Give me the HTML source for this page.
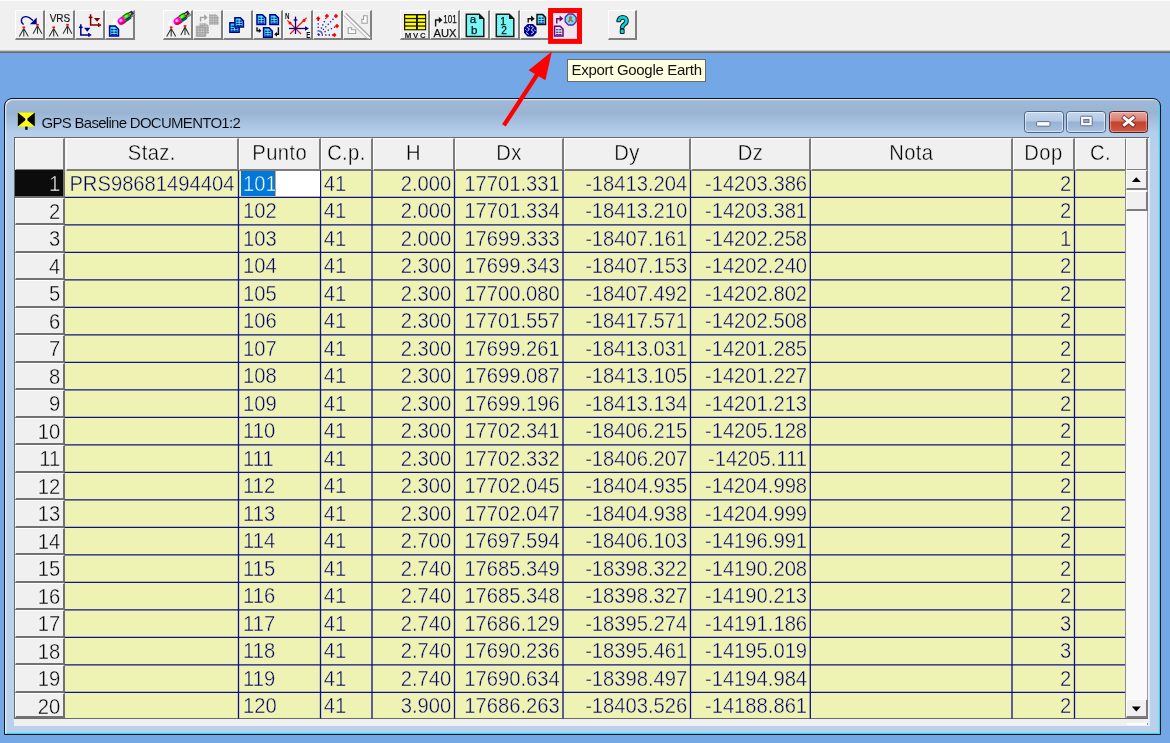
<!DOCTYPE html>
<html><head><meta charset="utf-8"><title>GPS Baseline</title>
<style>
html,body{margin:0;padding:0;}
body{width:1170px;height:743px;overflow:hidden;background:#74a7e6;position:relative;font-family:"Liberation Sans",sans-serif;}
#root{position:absolute;left:0;top:0;width:1170px;height:743px;will-change:transform;}
.abs{position:absolute;}
#toolbar{left:0;top:0;width:1170px;height:50px;background:#f0f0f0;border-top:1px solid #fafafa;box-sizing:border-box;}
#tbline{left:0;top:50px;width:1170px;height:3px;background:linear-gradient(#c6c6c6 0,#c6c6c6 33%,#8a8a8a 33%,#8a8a8a 66%,#696c71 66%);}
.tb{position:absolute;top:10px;height:30.4px;width:29.9px;box-sizing:border-box;background:#f0f0f0;border-top:1px solid #fff;border-left:1px solid #fff;border-bottom:2px solid #808080;border-right:2px solid #808080;}
.tb svg{position:absolute;left:0;top:0;}
#win{left:4.1px;top:97.8px;width:1156.8px;height:637.4px;box-sizing:border-box;border:1.2px solid #10161e;border-radius:8px 8px 0 0;background:linear-gradient(#9fb8d6 0px,#9ab4d4 14px,#b4ceec 34px,#b9d1ec 60px,#b9d1ec 100%);box-shadow:inset 1.3px 1.3px 0 rgba(255,255,255,.6), inset -1.2px -1.2px 0 #40d4ee;}
#title{left:41.6px;top:113.6px;font-size:15px;line-height:18px;color:#000;white-space:nowrap;letter-spacing:-0.72px;-webkit-text-stroke:0.12px #a9c3e3;}
#grid{left:14px;top:137px;width:1134px;height:581.5px;background:#f0f0f0;overflow:hidden;}
.cell{position:absolute;font-size:20.2px;color:#00006c;-webkit-text-stroke:0.4px #eef2b2;transform:scaleY(1.11);transform-origin:0 20px;white-space:nowrap;line-height:26px;height:26px;}
.hd{position:absolute;font-size:20.2px;color:#000;-webkit-text-stroke:0.38px #f0f0f0;letter-spacing:0.4px;white-space:nowrap;text-align:center;line-height:31px;}
.rh{position:absolute;font-size:20.2px;color:#000;-webkit-text-stroke:0.38px #f0f0f0;text-align:right;line-height:26px;}
.wbtn{top:110.8px;height:21.8px;box-sizing:border-box;border:1.2px solid #4f6482;border-radius:3.5px;background:linear-gradient(#c6d8ee 0%,#b3c9e6 45%,#97b1d3 50%,#a9c2e2 100%);box-shadow:inset 0 0 0 1.1px rgba(255,255,255,.55);}
.wclose{border-color:#5a1f1f;background:linear-gradient(#e8a99e 0%,#d9786a 45%,#c2402e 50%,#cf5a42 100%);box-shadow:inset 0 0 0 1.1px rgba(255,255,255,.35);}
.sbtn{box-sizing:border-box;background:#f0f0f0;border-top:1.4px solid #fff;border-left:1.4px solid #fff;border-right:2.3px solid #7c7c7c;border-bottom:2.3px solid #7c7c7c;}
#tip{left:567.3px;top:58.6px;width:138.4px;height:23px;box-sizing:border-box;border:1.2px solid #6a6a6a;background:#ffffe1;font-size:15px;line-height:20px;color:#111;white-space:nowrap;padding-left:3.2px;letter-spacing:-0.3px;}
.sy{display:inline-block;transform:translateY(-0.3px) scaleY(1.11);transform-origin:0 78%;}
.sr{display:inline-block;transform:translateY(1.2px) scaleY(1.11);transform-origin:0 78%;}
.vl{position:absolute;width:1.5px;background:#10107c;}
.hl{position:absolute;height:1.5px;background:#10107c;}
</style></head><body>
<div id="root">
<div id="toolbar" class="abs"></div>
<div id="tbline" class="abs"></div>
<div class="tb" style="left:15.30px;"></div>
<div class="tb" style="left:45.23px;"></div>
<div class="tb" style="left:75.16px;"></div>
<div class="tb" style="left:105.09px;"></div>
<div class="tb" style="left:163.00px;"></div>
<div class="tb" style="left:192.93px;"></div>
<div class="tb" style="left:222.86px;"></div>
<div class="tb" style="left:252.79px;"></div>
<div class="tb" style="left:282.72px;"></div>
<div class="tb" style="left:312.65px;"></div>
<div class="tb" style="left:342.58px;"></div>
<div class="tb" style="left:400.10px;"></div>
<div class="tb" style="left:430.03px;"></div>
<div class="tb" style="left:459.96px;"></div>
<div class="tb" style="left:489.89px;"></div>
<div class="tb" style="left:519.82px;"></div>
<div class="tb" style="left:607.60px;"></div>
<svg class="abs" style="left:0;top:0;" width="1170" height="52" viewBox="0 0 1170 52" font-family="Liberation Sans, sans-serif">
<defs>
<pattern id="ghatch" width="2.46" height="2.46" patternUnits="userSpaceOnUse"><rect width="2.46" height="2.46" fill="#a6a6a6"/><rect x="1.4" y="1.4" width="1.06" height="1.06" fill="#e8e8e8"/></pattern>
<pattern id="cdith" width="2.46" height="2.46" patternUnits="userSpaceOnUse"><rect width="2.46" height="2.46" fill="#9cfefe"/><rect width="1.23" height="1.23" fill="#52f0f0"/><rect x="1.23" y="1.23" width="1.23" height="1.23" fill="#52f0f0"/></pattern>
</defs>
<g stroke="#1a1a1a" stroke-width="1.05" fill="none" stroke-linecap="butt" opacity=".9"><path d="M23.8,28.4 L19.3,36.6 M23.8,28.4 L28.3,36.6 M23.8,28.4 L23.8,36.6"/></g><rect x="22.5" y="26.5" width="2.6" height="1.7" fill="#f00"/>
<g stroke="#1a1a1a" stroke-width="1.05" fill="none" stroke-linecap="butt" opacity=".9"><path d="M37.5,25.8 L33.1,33.8 M37.5,25.8 L41.9,33.8 M37.5,25.8 L37.5,33.8"/></g><rect x="36.2" y="23.900000000000002" width="2.6" height="1.7" fill="#f00"/>
<path d="M23.6,24.6 C19.6,21.5 21.2,16.4 26.4,16.6 C29.4,16.8 31,18.6 33,20.6" fill="none" stroke="#00008c" stroke-width="1.3"/>
<path d="M36.7,17.6 L36.7,24.2 L29.9,24.2 Z" fill="#00008c"/>
<text x="49.7" y="21.8" font-size="10.6" fill="#111" stroke="#111" stroke-width=".15" textLength="20.6" lengthAdjust="spacingAndGlyphs">VRS</text>
<g stroke="#1a1a1a" stroke-width="1.05" fill="none" stroke-linecap="butt" opacity=".9"><path d="M53.7,28.4 L49.2,36.6 M53.7,28.4 L58.2,36.6 M53.7,28.4 L53.7,36.6"/></g><rect x="52.400000000000006" y="26.5" width="2.6" height="1.7" fill="#f00"/>
<g stroke="#1a1a1a" stroke-width="1.05" fill="none" stroke-linecap="butt" opacity=".9"><path d="M67.5,25.8 L63.1,33.8 M67.5,25.8 L71.9,33.8 M67.5,25.8 L67.5,33.8"/></g><rect x="66.2" y="23.900000000000002" width="2.6" height="1.7" fill="#f00"/>
<g stroke="#800000" stroke-width="1.5" fill="none"><path d="M90.6,14.3 L90.6,25.0 L101.1,25.0"/><path d="M88.69999999999999,17.4 L92.5,17.4"/><path d="M98.69999999999999,23.1 L98.69999999999999,26.9"/></g><path d="M93.89999999999999,17.9 L100.19999999999999,17.9 L97.05,21.8 Z" fill="#800000"/>
<g stroke="#00008c" stroke-width="1.5" fill="none"><path d="M80.8,24.2 L80.8,34.9 L91.3,34.9"/><path d="M78.89999999999999,27.299999999999997 L82.7,27.299999999999997"/><path d="M88.89999999999999,33.0 L88.89999999999999,36.8"/></g><path d="M84.1,27.799999999999997 L90.39999999999999,27.799999999999997 L87.25,31.7 Z" fill="#00008c"/>
<path d="M114.3,17.6 L116.6,25.2 L112.3,25.2 Z" fill="#fff"/>
<path d="M109.6,26.0 L115.3,26.0 L118.5,29.2 L118.5,36.0 L109.6,36.0 Z" fill="#35d6f0" stroke="#00008c" stroke-width="1.5" stroke-linejoin="miter"/><path d="M111.19999999999999,29.6 L116.9,29.6" stroke="#00008c" stroke-width="1.1"/><path d="M111.19999999999999,32.2 L116.9,32.2" stroke="#00008c" stroke-width="1.1"/><path d="M111.19999999999999,34.6 L116.9,34.6" stroke="#00008c" stroke-width="1.1"/><path d="M114.05,27.5 L114.05,34.5" stroke="#b8ffff" stroke-width="0.9" opacity=".8"/>
<g transform="translate(121.9,20.7) rotate(-34) scale(1.04,0.84)"><path d="M0,-4.3 L3.2,-4.3 L3.2,4.3 L0,4.3 A4.3,4.3 0 0 1 0,-4.3 Z" fill="#ff00d0"/><path d="M0,4.3 A4.3,4.3 0 0 1 -4.1,1.2 L3.2,2.4 L3.2,4.3 Z" fill="#d80040"/><ellipse cx="-0.6" cy="-0.9" rx="1.7" ry="1.9" fill="#ff8ae8"/><ellipse cx="-0.9" cy="-1.1" rx="0.8" ry="0.9" fill="#ffe0fa"/><rect x="3.2" y="-4.3" width="5.6" height="5.4" fill="#14d400"/><rect x="3.2" y="-4.3" width="5.6" height="1.3" fill="#0a7a00"/><ellipse cx="5.8" cy="-1.6" rx="1.8" ry="1.4" fill="#7cff30"/><rect x="3.2" y="1.1" width="5.6" height="3.2" fill="#005e62"/><rect x="3.2" y="1.1" width="5.6" height="1.0" fill="#063030"/><rect x="8.8" y="-3.6" width="4.6" height="6.8" fill="#2a2a2a"/><rect x="9.4" y="-2.2" width="1.7" height="1.7" fill="#ffff00"/><rect x="11.4" y="-1.6" width="1.6" height="1.7" fill="#2828a8"/><rect x="9.8" y="0.9" width="4.2" height="2.4" fill="#909090"/></g>
<path d="M170.3,18.4 L172.6,25.6 L168.2,25.6 Z" fill="#fff"/>
<g transform="translate(177.8,20.9) rotate(-34) scale(1.04,0.84)"><path d="M0,-4.3 L3.2,-4.3 L3.2,4.3 L0,4.3 A4.3,4.3 0 0 1 0,-4.3 Z" fill="#ff00d0"/><path d="M0,4.3 A4.3,4.3 0 0 1 -4.1,1.2 L3.2,2.4 L3.2,4.3 Z" fill="#d80040"/><ellipse cx="-0.6" cy="-0.9" rx="1.7" ry="1.9" fill="#ff8ae8"/><ellipse cx="-0.9" cy="-1.1" rx="0.8" ry="0.9" fill="#ffe0fa"/><rect x="3.2" y="-4.3" width="5.6" height="5.4" fill="#14d400"/><rect x="3.2" y="-4.3" width="5.6" height="1.3" fill="#0a7a00"/><ellipse cx="5.8" cy="-1.6" rx="1.8" ry="1.4" fill="#7cff30"/><rect x="3.2" y="1.1" width="5.6" height="3.2" fill="#005e62"/><rect x="3.2" y="1.1" width="5.6" height="1.0" fill="#063030"/><rect x="8.8" y="-3.6" width="4.6" height="6.8" fill="#2a2a2a"/><rect x="9.4" y="-2.2" width="1.7" height="1.7" fill="#ffff00"/><rect x="11.4" y="-1.6" width="1.6" height="1.7" fill="#2828a8"/><rect x="9.8" y="0.9" width="4.2" height="2.4" fill="#909090"/></g>
<g stroke="#1a1a1a" stroke-width="1.05" fill="none" stroke-linecap="butt" opacity=".9"><path d="M171.2,28.4 L166.7,36.6 M171.2,28.4 L175.7,36.6 M171.2,28.4 L171.2,36.6"/></g><rect x="169.89999999999998" y="26.5" width="2.6" height="1.7" fill="#f00"/>
<g stroke="#1a1a1a" stroke-width="1.05" fill="none" stroke-linecap="butt" opacity=".9"><path d="M185.0,27.099999999999998 L180.8,34.9 M185.0,27.099999999999998 L189.2,34.9 M185.0,27.099999999999998 L185.0,34.9"/></g><rect x="183.7" y="25.2" width="2.6" height="1.7" fill="#f00"/>
<path d="M200.6,21.6 L200.6,17.4 L204.5,17.4" fill="none" stroke="#a0a0a0" stroke-width="1.4"/>
<path d="M204.2,14.2 L207.6,17.4 L204.2,20.6 Z" fill="#a0a0a0"/>
<path d="M209.2,14.3 L216,14.3 L218.8,17 L218.8,24.8 L209.2,24.8 Z" fill="url(#ghatch)"/>
<path d="M199.5,23.3 L206.2,23.3 L209,26 L209,33.6 L199.5,33.6 Z" fill="url(#ghatch)"/>
<path d="M196.3,26.2 L203,26.2 L205.8,29 L205.8,36.5 L196.3,36.5 Z" fill="url(#ghatch)" stroke="#a0a0a0" stroke-width=".8"/>
<path d="M229.9,22.8 L235.9,22.8 L239.1,26.0 L239.1,32.2 L229.9,32.2 Z" fill="#35d6f0" stroke="#00008c" stroke-width="1.5" stroke-linejoin="miter"/><path d="M231.5,26.184 L237.5,26.184" stroke="#00008c" stroke-width="1.1"/><path d="M231.5,28.628 L237.5,28.628" stroke="#00008c" stroke-width="1.1"/><path d="M231.5,30.884 L237.5,30.884" stroke="#00008c" stroke-width="1.1"/><path d="M234.5,24.3 L234.5,30.700000000000003" stroke="#b8ffff" stroke-width="0.9" opacity=".8"/>
<path d="M234.9,17.7 L240.20000000000002,17.7 L243.4,20.9 L243.4,27.0 L234.9,27.0 Z" fill="#35d6f0" stroke="#00008c" stroke-width="1.5" stroke-linejoin="miter"/><path d="M236.5,21.048 L241.8,21.048" stroke="#00008c" stroke-width="1.1"/><path d="M236.5,23.466 L241.8,23.466" stroke="#00008c" stroke-width="1.1"/><path d="M236.5,25.698 L241.8,25.698" stroke="#00008c" stroke-width="1.1"/><path d="M239.15,19.2 L239.15,25.5" stroke="#b8ffff" stroke-width="0.9" opacity=".8"/>
<path d="M257.0,14.7 L262.40000000000003,14.7 L265.6,17.9 L265.6,24.4 L257.0,24.4 Z" fill="#35d6f0" stroke="#00008c" stroke-width="1.5" stroke-linejoin="miter"/><path d="M258.6,18.192 L264.0,18.192" stroke="#00008c" stroke-width="1.1"/><path d="M258.6,20.714 L264.0,20.714" stroke="#00008c" stroke-width="1.1"/><path d="M258.6,23.041999999999998 L264.0,23.041999999999998" stroke="#00008c" stroke-width="1.1"/><path d="M261.3,16.2 L261.3,22.9" stroke="#b8ffff" stroke-width="0.9" opacity=".8"/>
<path d="M269.9,14.7 L275.2,14.7 L278.4,17.9 L278.4,24.4 L269.9,24.4 Z" fill="#35d6f0" stroke="#00008c" stroke-width="1.5" stroke-linejoin="miter"/><path d="M271.5,18.192 L276.79999999999995,18.192" stroke="#00008c" stroke-width="1.1"/><path d="M271.5,20.714 L276.79999999999995,20.714" stroke="#00008c" stroke-width="1.1"/><path d="M271.5,23.041999999999998 L276.79999999999995,23.041999999999998" stroke="#00008c" stroke-width="1.1"/><path d="M274.15,16.2 L274.15,22.9" stroke="#b8ffff" stroke-width="0.9" opacity=".8"/>
<path d="M263.6,27.8 L269.0,27.8 L272.2,31.0 L272.2,37.3 L263.6,37.3 Z" fill="#35d6f0" stroke="#00008c" stroke-width="1.5" stroke-linejoin="miter"/><path d="M265.20000000000005,31.22 L270.59999999999997,31.22" stroke="#00008c" stroke-width="1.1"/><path d="M265.20000000000005,33.69 L270.59999999999997,33.69" stroke="#00008c" stroke-width="1.1"/><path d="M265.20000000000005,35.97 L270.59999999999997,35.97" stroke="#00008c" stroke-width="1.1"/><path d="M267.9,29.3 L267.9,35.8" stroke="#b8ffff" stroke-width="0.9" opacity=".8"/>
<path d="M257,27.2 L257,30.7 L259.4,30.7" fill="none" stroke="#111" stroke-width="1.4"/><path d="M258.8,28.3 L261.4,30.7 L258.8,33.1 Z" fill="#111"/>
<path d="M278.4,27.2 L278.4,34.3 L276.4,34.3" fill="none" stroke="#111" stroke-width="1.4"/><path d="M277,31.9 L274.2,34.3 L277,36.7 Z" fill="#111"/>
<g stroke="#f01818" stroke-width="1.2"><path d="M287.4,20.4 L301,34"/><path d="M290,34 L306.6,17.8"/></g>
<circle cx="290" cy="23" r="1.5" fill="#f00"/><circle cx="304" cy="20.4" r="1.5" fill="#f00"/>
<g stroke="#00008c" stroke-width="1.3" fill="none"><path d="M295.5,16.6 L295.5,34"/><path d="M289,28.5 L306.5,28.5"/><path d="M293.6,20 L297.4,20"/></g>
<path d="M305,26.2 L308.9,28.5 L305,30.8 Z" fill="#00008c"/>
<text x="284.9" y="18.9" font-size="8.4" font-weight="bold" fill="#111" textLength="4.5" lengthAdjust="spacingAndGlyphs">N</text>
<text x="306.2" y="38" font-size="8.4" font-weight="bold" fill="#111" textLength="4.2" lengthAdjust="spacingAndGlyphs">E</text>
<path d="M318.2,35.0 L318.2,18.5" stroke="#1c1ca0" stroke-width="1.35" stroke-dasharray="1.3 2.2" fill="none"/>
<path d="M318.2,35.0 L326.9,16.0" stroke="#1c1ca0" stroke-width="1.35" stroke-dasharray="1.3 2.2" fill="none"/>
<path d="M318.2,35.0 L336.0,16.0" stroke="#1c1ca0" stroke-width="1.35" stroke-dasharray="1.3 2.2" fill="none"/>
<path d="M318.2,35.0 L337.0,26.0" stroke="#1c1ca0" stroke-width="1.35" stroke-dasharray="1.3 2.2" fill="none"/>
<path d="M318.2,35.0 L334.4,35.0" stroke="#1c1ca0" stroke-width="1.35" stroke-dasharray="1.3 2.2" fill="none"/>
<path d="M316.0,18.5 L318.2,16.3 L320.4,18.5 L318.2,20.7 Z" fill="#f00"/>
<path d="M324.7,16.0 L326.9,13.8 L329.09999999999997,16.0 L326.9,18.2 Z" fill="#f00"/>
<path d="M333.8,16.0 L336.0,13.8 L338.2,16.0 L336.0,18.2 Z" fill="#f00"/>
<path d="M334.8,26.0 L337.0,23.8 L339.2,26.0 L337.0,28.2 Z" fill="#f00"/>
<path d="M332.2,35.0 L334.4,32.8 L336.59999999999997,35.0 L334.4,37.2 Z" fill="#f00"/>
<path d="M345.8,13.2 L371,37.8" stroke="#a0a0a0" stroke-width="1.2"/><path d="M344.6,14.2 L369.6,38.6" stroke="#fff" stroke-width="1.2"/><path d="M343.6,15.4 L368.4,39.6" stroke="#a8a8a8" stroke-width="1.0"/>
<path d="M363.6,15.8 L367.2,15.8 L367.2,23.2 L361.9,23.2 L361.9,19.4 L363.6,19.4 Z" fill="#fff" stroke="#a0a0a0" stroke-width="1.1"/>
<path d="M348.2,27.8 L351.6,27.8 L351.6,29.8 L355.7,29.8 L355.7,33.5 L348.2,33.5 Z" fill="#fff" stroke="#a0a0a0" stroke-width="1.1"/>
<rect x="404" y="14" width="22.2" height="16.3" fill="#141400"/>
<rect x="405.2" y="15.40" width="10.8" height="2.5" fill="#ffff00"/>
<rect x="417.9" y="15.40" width="7.2" height="2.5" fill="#ffff00"/>
<rect x="405.2" y="19.15" width="10.8" height="2.5" fill="#ffff00"/>
<rect x="417.9" y="19.15" width="7.2" height="2.5" fill="#ffff00"/>
<rect x="405.2" y="22.90" width="10.8" height="2.5" fill="#ffff00"/>
<rect x="417.9" y="22.90" width="7.2" height="2.5" fill="#ffff00"/>
<rect x="405.2" y="26.65" width="10.8" height="2.5" fill="#ffff00"/>
<rect x="417.9" y="26.65" width="7.2" height="2.5" fill="#ffff00"/>
<text x="404.8" y="37.9" font-size="7.9" font-weight="bold" fill="#111" textLength="20.8" lengthAdjust="spacing">MVC</text>
<path d="M435.6,26.4 L435.6,20 L439.4,20" fill="none" stroke="#111" stroke-width="1.4"/><path d="M438.8,16.8 L442.4,20 L438.8,23.2 Z" fill="#111"/>
<text x="443.3" y="22.5" font-size="11.2" fill="#111" stroke="#111" stroke-width=".25" textLength="13.4" lengthAdjust="spacingAndGlyphs">101</text>
<text x="433.6" y="36.6" font-size="11.2" fill="#111" stroke="#111" stroke-width=".25" textLength="23" lengthAdjust="spacingAndGlyphs">AUX</text>
<path d="M466.3,14.2 L479.2,14.2 L483.8,18.799999999999997 L483.8,36.5 L466.3,36.5 Z" fill="url(#cdith)" stroke="#1a1a1a" stroke-width="1.5"/><path d="M479.0,14.2 L483.8,19.0 L479.0,19.0 Z" fill="#111"/><text x="473.1" y="22.5" font-size="11.6" fill="#111" stroke="#111" stroke-width=".25" text-anchor="middle">a</text><text x="474.3" y="33.7" font-size="11.6" fill="#111" stroke="#111" stroke-width=".25" text-anchor="middle">b</text>
<path d="M496.3,14.2 L509.19999999999993,14.2 L513.8,18.799999999999997 L513.8,36.5 L496.3,36.5 Z" fill="url(#cdith)" stroke="#1a1a1a" stroke-width="1.5"/><path d="M508.99999999999994,14.2 L513.8,19.0 L508.99999999999994,19.0 Z" fill="#111"/><text x="503.2" y="24.9" font-size="10.2" fill="#111" stroke="#111" stroke-width=".25" text-anchor="middle">1</text><text x="504.0" y="33.7" font-size="10.2" fill="#111" stroke="#111" stroke-width=".25" text-anchor="middle">2</text>
<path d="M528.2,22.6 L528.2,18.7 L531.6,18.7" fill="none" stroke="#111" stroke-width="1.4"/><path d="M531,15.6 L534.7,18.7 L531,21.8 Z" fill="#111"/>
<path d="M537.0,14.6 L542.7,14.6 L545.5,17.4 L545.5,24.4 L537.0,24.4 Z" fill="#5ce8f4" stroke="#141414" stroke-width="1.5" stroke-linejoin="miter"/><path d="M538.6,18.128 L543.9,18.128" stroke="#00008c" stroke-width="1.1"/><path d="M538.6,20.676 L543.9,20.676" stroke="#00008c" stroke-width="1.1"/><path d="M538.6,23.028 L543.9,23.028" stroke="#00008c" stroke-width="1.1"/><path d="M541.25,16.1 L541.25,22.9" stroke="#b8ffff" stroke-width="0.9" opacity=".8"/>
<path d="M527.6,24 L533,24 L536.6,27.6 L536.6,32.8 L533,36.4 L527.6,36.4 L524,32.8 L524,27.6 Z" fill="#00008c"/>
<g stroke="#e8e8ff" stroke-width="1" fill="none"><path d="M526.6,27.2 L529.4,28.8 L527.6,31.4 M531,26 L533.6,27.8 L531.2,30 L533.8,32.2 L531,34.2 M526,32.6 L528.6,34.4 M529.4,25.4 L529.4,27 M534.6,29.6 L535.4,31 M525.4,29.4 L526.4,30.4"/></g>
<rect x="550.6" y="10.5" width="28.9" height="30.9" fill="#f0e4f1" stroke="#ff0000" stroke-width="5"/>
<path d="M556.8,23.4 L556.8,18.7 L560.2,18.7" fill="none" stroke="#700070" stroke-width="1.4"/><path d="M559.6,15.6 L563.3,18.7 L559.6,21.8 Z" fill="#700070"/>
<path d="M568.4,14 L573,14 L576.2,17.2 L576.2,21.8 L573,25 L568.4,25 L565.2,21.8 L565.2,17.2 Z" fill="#6ae6f2" stroke="#6a20a0" stroke-width="1.3"/>
<path d="M570.6,15.6 L572.4,17.6 L571.6,19.4 L573.8,21.6 L572,22.4 L570.6,20.6 L569,22.8 L567.8,21.6 L569.4,19.2 L568.6,17.4 Z" fill="#a07050"/>
<path d="M554.5,26.2 L560.2,26.2 L563.0,29.0 L563.0,36.0 L554.5,36.0 Z" fill="#c8e8f8" stroke="#700070" stroke-width="1.5" stroke-linejoin="miter"/><path d="M556.1,29.727999999999998 L561.4,29.727999999999998" stroke="#700070" stroke-width="1.1"/><path d="M556.1,32.275999999999996 L561.4,32.275999999999996" stroke="#700070" stroke-width="1.1"/><path d="M556.1,34.628 L561.4,34.628" stroke="#700070" stroke-width="1.1"/><path d="M558.75,27.7 L558.75,34.5" stroke="#b8ffff" stroke-width="0.9" opacity=".8"/>
<text x="622.6" y="33.3" font-size="23.5" font-weight="bold" fill="#00d4dc" stroke="#181818" stroke-width="2.2" stroke-linejoin="round" text-anchor="middle" paint-order="stroke" textLength="12.8" lengthAdjust="spacingAndGlyphs">?</text>
</svg>
<div id="win" class="abs"></div>

<svg class="abs" style="left:17px;top:111px;" width="20" height="20" viewBox="0 0 20 20">
<rect x="0.8" y="1.6" width="17" height="14" fill="#ffff00"/>
<path d="M0.8,1.6 L9.3,8.6 L0.8,15.6 Z" fill="#000"/>
<path d="M17.8,1.6 L9.3,8.6 L17.8,15.6 Z" fill="#000"/>
<rect x="8.4" y="7.4" width="2" height="2.2" fill="#fff"/>
<rect x="8.2" y="15.6" width="2.4" height="3.2" fill="#000"/>
</svg>
<div id="title" class="abs">GPS Baseline DOCUMENTO1:2</div>
<div class="abs wbtn" style="left:1024px;width:39.5px;"></div>
<div class="abs wbtn" style="left:1066.3px;width:39.3px;"></div>
<div class="abs wbtn wclose" style="left:1108.8px;width:39.6px;"></div>
<svg class="abs" style="left:1020px;top:108px;" width="134" height="28" viewBox="1020 108 134 28">
<rect x="1036.6" y="121.6" width="13.4" height="4.6" rx="1" fill="#fbfcfe" stroke="#5e6e84" stroke-width="1"/>
<rect x="1080.6" y="116.2" width="11.6" height="9.6" rx="1" fill="#fbfcfe" stroke="#5e6e84" stroke-width="1"/>
<rect x="1083.8" y="119.4" width="5.2" height="3.2" fill="#93abc9" stroke="#5e6e84" stroke-width=".9"/>
<path d="M1124.4,117.8 L1133,124.8 M1133,117.8 L1124.4,124.8" stroke="#5a2a2a" stroke-width="4.8" stroke-linecap="square" opacity=".75"/>
<path d="M1124.4,117.8 L1133,124.8 M1133,117.8 L1124.4,124.8" stroke="#fcfcfc" stroke-width="2.9" stroke-linecap="square"/>
</svg>


<div class="abs" style="left:14.2px;top:136.7px;width:1134.6px;height:588.9px;background:#f0f0f0;box-shadow:1px 0 0 rgba(255,255,255,.55);"></div>
<div class="abs" style="left:14.2px;top:136.7px;width:1134.6px;height:582.2px;box-sizing:border-box;border-left:1.2px solid #6a6a6a;border-top:1.2px solid #6a6a6a;"></div>
<div class="abs" style="left:14px;top:717.7px;width:1134px;height:1.2px;background:#6a6a6a;"></div>
<div class="abs" style="left:64.8px;top:169.7px;width:1061.2px;height:548.8px;background:#eef2b2;"></div>
<div class="hd" style="left:15.3px;top:137.5px;width:50.2px;height:33.19999999999999px;box-sizing:border-box;border-top:1.5px solid #fff;border-left:1.5px solid #fff;border-right:2px solid #7c7c7c;border-bottom:2px solid #7c7c7c;background:#f0f0f0;"><span class="sy"></span></div>
<div class="hd" style="left:65.5px;top:137.5px;width:173.7px;height:33.19999999999999px;box-sizing:border-box;border-top:1.5px solid #fff;border-left:1.5px solid #fff;border-right:2px solid #7c7c7c;border-bottom:2px solid #7c7c7c;background:#f0f0f0;"><span class="sy">Staz.</span></div>
<div class="hd" style="left:239.2px;top:137.5px;width:82.0px;height:33.19999999999999px;box-sizing:border-box;border-top:1.5px solid #fff;border-left:1.5px solid #fff;border-right:2px solid #7c7c7c;border-bottom:2px solid #7c7c7c;background:#f0f0f0;"><span class="sy">Punto</span></div>
<div class="hd" style="left:321.2px;top:137.5px;width:51.5px;height:33.19999999999999px;box-sizing:border-box;border-top:1.5px solid #fff;border-left:1.5px solid #fff;border-right:2px solid #7c7c7c;border-bottom:2px solid #7c7c7c;background:#f0f0f0;"><span class="sy">C.p.</span></div>
<div class="hd" style="left:372.7px;top:137.5px;width:82.5px;height:33.19999999999999px;box-sizing:border-box;border-top:1.5px solid #fff;border-left:1.5px solid #fff;border-right:2px solid #7c7c7c;border-bottom:2px solid #7c7c7c;background:#f0f0f0;"><span class="sy">H</span></div>
<div class="hd" style="left:455.2px;top:137.5px;width:108.50000000000006px;height:33.19999999999999px;box-sizing:border-box;border-top:1.5px solid #fff;border-left:1.5px solid #fff;border-right:2px solid #7c7c7c;border-bottom:2px solid #7c7c7c;background:#f0f0f0;"><span class="sy">Dx</span></div>
<div class="hd" style="left:563.7px;top:137.5px;width:127.5px;height:33.19999999999999px;box-sizing:border-box;border-top:1.5px solid #fff;border-left:1.5px solid #fff;border-right:2px solid #7c7c7c;border-bottom:2px solid #7c7c7c;background:#f0f0f0;"><span class="sy">Dy</span></div>
<div class="hd" style="left:691.2px;top:137.5px;width:119.79999999999995px;height:33.19999999999999px;box-sizing:border-box;border-top:1.5px solid #fff;border-left:1.5px solid #fff;border-right:2px solid #7c7c7c;border-bottom:2px solid #7c7c7c;background:#f0f0f0;"><span class="sy">Dz</span></div>
<div class="hd" style="left:811.0px;top:137.5px;width:201.70000000000005px;height:33.19999999999999px;box-sizing:border-box;border-top:1.5px solid #fff;border-left:1.5px solid #fff;border-right:2px solid #7c7c7c;border-bottom:2px solid #7c7c7c;background:#f0f0f0;"><span class="sy">Nota</span></div>
<div class="hd" style="left:1012.7px;top:137.5px;width:62.5px;height:33.19999999999999px;box-sizing:border-box;border-top:1.5px solid #fff;border-left:1.5px solid #fff;border-right:2px solid #7c7c7c;border-bottom:2px solid #7c7c7c;background:#f0f0f0;"><span class="sy">Dop</span></div>
<div class="hd" style="left:1075.2px;top:137.5px;width:51.5px;height:33.19999999999999px;box-sizing:border-box;border-top:1.5px solid #fff;border-left:1.5px solid #fff;border-right:2px solid #7c7c7c;border-bottom:2px solid #7c7c7c;background:#f0f0f0;"><span class="sy">C.</span></div>
<div class="hd" style="left:1126px;top:137.5px;width:22px;height:33.19999999999999px;box-sizing:border-box;border-top:1.5px solid #fff;border-left:1.5px solid #fff;border-right:2px solid #7c7c7c;border-bottom:2px solid #7c7c7c;background:#f0f0f0;"></div>
<div class="rh" style="left:15.3px;top:170.39999999999998px;width:49.5px;height:27.5px;background:#0c0c0c;color:#fff;-webkit-text-stroke:0.5px #0c0c0c;box-sizing:border-box;border-right:2px solid #707070;border-bottom:2.2px solid #6c6c6c;padding-right:2.6px;line-height:27px;"><span class="sr">1</span></div>
<div class="rh" style="left:15.3px;top:197.89999999999998px;width:49.5px;height:27.5px;box-sizing:border-box;border-top:1.4px solid #fff;border-left:1.4px solid #fff;border-right:2px solid #707070;border-bottom:2.4px solid #727272;background:#f0f0f0;padding-right:2.6px;line-height:25.6px;"><span class="sr">2</span></div>
<div class="rh" style="left:15.3px;top:225.39999999999998px;width:49.5px;height:27.5px;box-sizing:border-box;border-top:1.4px solid #fff;border-left:1.4px solid #fff;border-right:2px solid #707070;border-bottom:2.4px solid #727272;background:#f0f0f0;padding-right:2.6px;line-height:25.6px;"><span class="sr">3</span></div>
<div class="rh" style="left:15.3px;top:252.89999999999998px;width:49.5px;height:27.5px;box-sizing:border-box;border-top:1.4px solid #fff;border-left:1.4px solid #fff;border-right:2px solid #707070;border-bottom:2.4px solid #727272;background:#f0f0f0;padding-right:2.6px;line-height:25.6px;"><span class="sr">4</span></div>
<div class="rh" style="left:15.3px;top:280.4px;width:49.5px;height:27.5px;box-sizing:border-box;border-top:1.4px solid #fff;border-left:1.4px solid #fff;border-right:2px solid #707070;border-bottom:2.4px solid #727272;background:#f0f0f0;padding-right:2.6px;line-height:25.6px;"><span class="sr">5</span></div>
<div class="rh" style="left:15.3px;top:307.9px;width:49.5px;height:27.5px;box-sizing:border-box;border-top:1.4px solid #fff;border-left:1.4px solid #fff;border-right:2px solid #707070;border-bottom:2.4px solid #727272;background:#f0f0f0;padding-right:2.6px;line-height:25.6px;"><span class="sr">6</span></div>
<div class="rh" style="left:15.3px;top:335.4px;width:49.5px;height:27.5px;box-sizing:border-box;border-top:1.4px solid #fff;border-left:1.4px solid #fff;border-right:2px solid #707070;border-bottom:2.4px solid #727272;background:#f0f0f0;padding-right:2.6px;line-height:25.6px;"><span class="sr">7</span></div>
<div class="rh" style="left:15.3px;top:362.9px;width:49.5px;height:27.5px;box-sizing:border-box;border-top:1.4px solid #fff;border-left:1.4px solid #fff;border-right:2px solid #707070;border-bottom:2.4px solid #727272;background:#f0f0f0;padding-right:2.6px;line-height:25.6px;"><span class="sr">8</span></div>
<div class="rh" style="left:15.3px;top:390.4px;width:49.5px;height:27.5px;box-sizing:border-box;border-top:1.4px solid #fff;border-left:1.4px solid #fff;border-right:2px solid #707070;border-bottom:2.4px solid #727272;background:#f0f0f0;padding-right:2.6px;line-height:25.6px;"><span class="sr">9</span></div>
<div class="rh" style="left:15.3px;top:417.9px;width:49.5px;height:27.5px;box-sizing:border-box;border-top:1.4px solid #fff;border-left:1.4px solid #fff;border-right:2px solid #707070;border-bottom:2.4px solid #727272;background:#f0f0f0;padding-right:2.6px;line-height:25.6px;"><span class="sr">10</span></div>
<div class="rh" style="left:15.3px;top:445.4px;width:49.5px;height:27.5px;box-sizing:border-box;border-top:1.4px solid #fff;border-left:1.4px solid #fff;border-right:2px solid #707070;border-bottom:2.4px solid #727272;background:#f0f0f0;padding-right:2.6px;line-height:25.6px;"><span class="sr">11</span></div>
<div class="rh" style="left:15.3px;top:472.9px;width:49.5px;height:27.5px;box-sizing:border-box;border-top:1.4px solid #fff;border-left:1.4px solid #fff;border-right:2px solid #707070;border-bottom:2.4px solid #727272;background:#f0f0f0;padding-right:2.6px;line-height:25.6px;"><span class="sr">12</span></div>
<div class="rh" style="left:15.3px;top:500.4px;width:49.5px;height:27.5px;box-sizing:border-box;border-top:1.4px solid #fff;border-left:1.4px solid #fff;border-right:2px solid #707070;border-bottom:2.4px solid #727272;background:#f0f0f0;padding-right:2.6px;line-height:25.6px;"><span class="sr">13</span></div>
<div class="rh" style="left:15.3px;top:527.9px;width:49.5px;height:27.5px;box-sizing:border-box;border-top:1.4px solid #fff;border-left:1.4px solid #fff;border-right:2px solid #707070;border-bottom:2.4px solid #727272;background:#f0f0f0;padding-right:2.6px;line-height:25.6px;"><span class="sr">14</span></div>
<div class="rh" style="left:15.3px;top:555.4px;width:49.5px;height:27.5px;box-sizing:border-box;border-top:1.4px solid #fff;border-left:1.4px solid #fff;border-right:2px solid #707070;border-bottom:2.4px solid #727272;background:#f0f0f0;padding-right:2.6px;line-height:25.6px;"><span class="sr">15</span></div>
<div class="rh" style="left:15.3px;top:582.9px;width:49.5px;height:27.5px;box-sizing:border-box;border-top:1.4px solid #fff;border-left:1.4px solid #fff;border-right:2px solid #707070;border-bottom:2.4px solid #727272;background:#f0f0f0;padding-right:2.6px;line-height:25.6px;"><span class="sr">16</span></div>
<div class="rh" style="left:15.3px;top:610.4px;width:49.5px;height:27.5px;box-sizing:border-box;border-top:1.4px solid #fff;border-left:1.4px solid #fff;border-right:2px solid #707070;border-bottom:2.4px solid #727272;background:#f0f0f0;padding-right:2.6px;line-height:25.6px;"><span class="sr">17</span></div>
<div class="rh" style="left:15.3px;top:637.9px;width:49.5px;height:27.5px;box-sizing:border-box;border-top:1.4px solid #fff;border-left:1.4px solid #fff;border-right:2px solid #707070;border-bottom:2.4px solid #727272;background:#f0f0f0;padding-right:2.6px;line-height:25.6px;"><span class="sr">18</span></div>
<div class="rh" style="left:15.3px;top:665.4px;width:49.5px;height:27.5px;box-sizing:border-box;border-top:1.4px solid #fff;border-left:1.4px solid #fff;border-right:2px solid #707070;border-bottom:2.4px solid #727272;background:#f0f0f0;padding-right:2.6px;line-height:25.6px;"><span class="sr">19</span></div>
<div class="rh" style="left:15.3px;top:692.9px;width:49.5px;height:25.600000000000023px;box-sizing:border-box;border-top:1.4px solid #fff;border-left:1.4px solid #fff;border-right:2px solid #707070;border-bottom:2.4px solid #727272;background:#f0f0f0;padding-right:2.6px;line-height:25.6px;"><span class="sr">20</span></div>
<svg class="abs" style="left:0;top:0;" width="1170" height="743" viewBox="0 0 1170 743"><path d="M238.5,170.5 L238.5,718.5 M320.5,170.5 L320.5,718.5 M372,170.5 L372,718.5 M454.5,170.5 L454.5,718.5 M563,170.5 L563,718.5 M690.5,170.5 L690.5,718.5 M810.3,170.5 L810.3,718.5 M1012,170.5 L1012,718.5 M1074.5,170.5 L1074.5,718.5 M64.8,197.30 L1126,197.30 M64.8,224.80 L1126,224.80 M64.8,252.30 L1126,252.30 M64.8,279.80 L1126,279.80 M64.8,307.30 L1126,307.30 M64.8,334.80 L1126,334.80 M64.8,362.30 L1126,362.30 M64.8,389.80 L1126,389.80 M64.8,417.30 L1126,417.30 M64.8,444.80 L1126,444.80 M64.8,472.30 L1126,472.30 M64.8,499.80 L1126,499.80 M64.8,527.30 L1126,527.30 M64.8,554.80 L1126,554.80 M64.8,582.30 L1126,582.30 M64.8,609.80 L1126,609.80 M64.8,637.30 L1126,637.30 M64.8,664.80 L1126,664.80 M64.8,692.30 L1126,692.30" stroke="#10108c" stroke-width="1.3" fill="none"/></svg>
<div class="cell" style="left:69.39999999999999px;top:170.89999999999998px;">PRS98681494404</div>
<div class="abs" style="left:240.7px;top:171.4px;width:79.5px;height:24.5px;background:#fff;"></div>
<div class="abs" style="left:240.7px;top:171.4px;width:34.7px;height:24.5px;background:#0078d7;"></div>
<div class="abs" style="left:275.3px;top:171.4px;width:1.1px;height:24.5px;background:#f0a060;"></div>
<div class="cell" style="left:243.1px;top:170.89999999999998px;color:#fff;-webkit-text-stroke:0.45px #0078d7;">101</div>
<div class="cell" style="left:323.7px;top:170.89999999999998px;">41</div>
<div class="cell" style="left:372px;width:79.3px;top:170.89999999999998px;text-align:right;">2.000</div>
<div class="cell" style="left:454.5px;width:105.3px;top:170.89999999999998px;text-align:right;">17701.331</div>
<div class="cell" style="left:563px;width:124.3px;top:170.89999999999998px;text-align:right;">-18413.204</div>
<div class="cell" style="left:690.5px;width:116.59999999999995px;top:170.89999999999998px;text-align:right;">-14203.386</div>
<div class="cell" style="left:1012px;width:59.3px;top:170.89999999999998px;text-align:right;">2</div>
<div class="cell" style="left:243.0px;top:198.39999999999998px;">102</div>
<div class="cell" style="left:323.7px;top:198.39999999999998px;">41</div>
<div class="cell" style="left:372px;width:79.3px;top:198.39999999999998px;text-align:right;">2.000</div>
<div class="cell" style="left:454.5px;width:105.3px;top:198.39999999999998px;text-align:right;">17701.334</div>
<div class="cell" style="left:563px;width:124.3px;top:198.39999999999998px;text-align:right;">-18413.210</div>
<div class="cell" style="left:690.5px;width:116.59999999999995px;top:198.39999999999998px;text-align:right;">-14203.381</div>
<div class="cell" style="left:1012px;width:59.3px;top:198.39999999999998px;text-align:right;">2</div>
<div class="cell" style="left:243.0px;top:225.89999999999998px;">103</div>
<div class="cell" style="left:323.7px;top:225.89999999999998px;">41</div>
<div class="cell" style="left:372px;width:79.3px;top:225.89999999999998px;text-align:right;">2.000</div>
<div class="cell" style="left:454.5px;width:105.3px;top:225.89999999999998px;text-align:right;">17699.333</div>
<div class="cell" style="left:563px;width:124.3px;top:225.89999999999998px;text-align:right;">-18407.161</div>
<div class="cell" style="left:690.5px;width:116.59999999999995px;top:225.89999999999998px;text-align:right;">-14202.258</div>
<div class="cell" style="left:1012px;width:59.3px;top:225.89999999999998px;text-align:right;">1</div>
<div class="cell" style="left:243.0px;top:253.39999999999998px;">104</div>
<div class="cell" style="left:323.7px;top:253.39999999999998px;">41</div>
<div class="cell" style="left:372px;width:79.3px;top:253.39999999999998px;text-align:right;">2.300</div>
<div class="cell" style="left:454.5px;width:105.3px;top:253.39999999999998px;text-align:right;">17699.343</div>
<div class="cell" style="left:563px;width:124.3px;top:253.39999999999998px;text-align:right;">-18407.153</div>
<div class="cell" style="left:690.5px;width:116.59999999999995px;top:253.39999999999998px;text-align:right;">-14202.240</div>
<div class="cell" style="left:1012px;width:59.3px;top:253.39999999999998px;text-align:right;">2</div>
<div class="cell" style="left:243.0px;top:280.9px;">105</div>
<div class="cell" style="left:323.7px;top:280.9px;">41</div>
<div class="cell" style="left:372px;width:79.3px;top:280.9px;text-align:right;">2.300</div>
<div class="cell" style="left:454.5px;width:105.3px;top:280.9px;text-align:right;">17700.080</div>
<div class="cell" style="left:563px;width:124.3px;top:280.9px;text-align:right;">-18407.492</div>
<div class="cell" style="left:690.5px;width:116.59999999999995px;top:280.9px;text-align:right;">-14202.802</div>
<div class="cell" style="left:1012px;width:59.3px;top:280.9px;text-align:right;">2</div>
<div class="cell" style="left:243.0px;top:308.4px;">106</div>
<div class="cell" style="left:323.7px;top:308.4px;">41</div>
<div class="cell" style="left:372px;width:79.3px;top:308.4px;text-align:right;">2.300</div>
<div class="cell" style="left:454.5px;width:105.3px;top:308.4px;text-align:right;">17701.557</div>
<div class="cell" style="left:563px;width:124.3px;top:308.4px;text-align:right;">-18417.571</div>
<div class="cell" style="left:690.5px;width:116.59999999999995px;top:308.4px;text-align:right;">-14202.508</div>
<div class="cell" style="left:1012px;width:59.3px;top:308.4px;text-align:right;">2</div>
<div class="cell" style="left:243.0px;top:335.9px;">107</div>
<div class="cell" style="left:323.7px;top:335.9px;">41</div>
<div class="cell" style="left:372px;width:79.3px;top:335.9px;text-align:right;">2.300</div>
<div class="cell" style="left:454.5px;width:105.3px;top:335.9px;text-align:right;">17699.261</div>
<div class="cell" style="left:563px;width:124.3px;top:335.9px;text-align:right;">-18413.031</div>
<div class="cell" style="left:690.5px;width:116.59999999999995px;top:335.9px;text-align:right;">-14201.285</div>
<div class="cell" style="left:1012px;width:59.3px;top:335.9px;text-align:right;">2</div>
<div class="cell" style="left:243.0px;top:363.4px;">108</div>
<div class="cell" style="left:323.7px;top:363.4px;">41</div>
<div class="cell" style="left:372px;width:79.3px;top:363.4px;text-align:right;">2.300</div>
<div class="cell" style="left:454.5px;width:105.3px;top:363.4px;text-align:right;">17699.087</div>
<div class="cell" style="left:563px;width:124.3px;top:363.4px;text-align:right;">-18413.105</div>
<div class="cell" style="left:690.5px;width:116.59999999999995px;top:363.4px;text-align:right;">-14201.227</div>
<div class="cell" style="left:1012px;width:59.3px;top:363.4px;text-align:right;">2</div>
<div class="cell" style="left:243.0px;top:390.9px;">109</div>
<div class="cell" style="left:323.7px;top:390.9px;">41</div>
<div class="cell" style="left:372px;width:79.3px;top:390.9px;text-align:right;">2.300</div>
<div class="cell" style="left:454.5px;width:105.3px;top:390.9px;text-align:right;">17699.196</div>
<div class="cell" style="left:563px;width:124.3px;top:390.9px;text-align:right;">-18413.134</div>
<div class="cell" style="left:690.5px;width:116.59999999999995px;top:390.9px;text-align:right;">-14201.213</div>
<div class="cell" style="left:1012px;width:59.3px;top:390.9px;text-align:right;">2</div>
<div class="cell" style="left:243.0px;top:418.4px;">110</div>
<div class="cell" style="left:323.7px;top:418.4px;">41</div>
<div class="cell" style="left:372px;width:79.3px;top:418.4px;text-align:right;">2.300</div>
<div class="cell" style="left:454.5px;width:105.3px;top:418.4px;text-align:right;">17702.341</div>
<div class="cell" style="left:563px;width:124.3px;top:418.4px;text-align:right;">-18406.215</div>
<div class="cell" style="left:690.5px;width:116.59999999999995px;top:418.4px;text-align:right;">-14205.128</div>
<div class="cell" style="left:1012px;width:59.3px;top:418.4px;text-align:right;">2</div>
<div class="cell" style="left:243.0px;top:445.9px;">111</div>
<div class="cell" style="left:323.7px;top:445.9px;">41</div>
<div class="cell" style="left:372px;width:79.3px;top:445.9px;text-align:right;">2.300</div>
<div class="cell" style="left:454.5px;width:105.3px;top:445.9px;text-align:right;">17702.332</div>
<div class="cell" style="left:563px;width:124.3px;top:445.9px;text-align:right;">-18406.207</div>
<div class="cell" style="left:690.5px;width:116.59999999999995px;top:445.9px;text-align:right;">-14205.111</div>
<div class="cell" style="left:1012px;width:59.3px;top:445.9px;text-align:right;">2</div>
<div class="cell" style="left:243.0px;top:473.4px;">112</div>
<div class="cell" style="left:323.7px;top:473.4px;">41</div>
<div class="cell" style="left:372px;width:79.3px;top:473.4px;text-align:right;">2.300</div>
<div class="cell" style="left:454.5px;width:105.3px;top:473.4px;text-align:right;">17702.045</div>
<div class="cell" style="left:563px;width:124.3px;top:473.4px;text-align:right;">-18404.935</div>
<div class="cell" style="left:690.5px;width:116.59999999999995px;top:473.4px;text-align:right;">-14204.998</div>
<div class="cell" style="left:1012px;width:59.3px;top:473.4px;text-align:right;">2</div>
<div class="cell" style="left:243.0px;top:500.9px;">113</div>
<div class="cell" style="left:323.7px;top:500.9px;">41</div>
<div class="cell" style="left:372px;width:79.3px;top:500.9px;text-align:right;">2.300</div>
<div class="cell" style="left:454.5px;width:105.3px;top:500.9px;text-align:right;">17702.047</div>
<div class="cell" style="left:563px;width:124.3px;top:500.9px;text-align:right;">-18404.938</div>
<div class="cell" style="left:690.5px;width:116.59999999999995px;top:500.9px;text-align:right;">-14204.999</div>
<div class="cell" style="left:1012px;width:59.3px;top:500.9px;text-align:right;">2</div>
<div class="cell" style="left:243.0px;top:528.4px;">114</div>
<div class="cell" style="left:323.7px;top:528.4px;">41</div>
<div class="cell" style="left:372px;width:79.3px;top:528.4px;text-align:right;">2.700</div>
<div class="cell" style="left:454.5px;width:105.3px;top:528.4px;text-align:right;">17697.594</div>
<div class="cell" style="left:563px;width:124.3px;top:528.4px;text-align:right;">-18406.103</div>
<div class="cell" style="left:690.5px;width:116.59999999999995px;top:528.4px;text-align:right;">-14196.991</div>
<div class="cell" style="left:1012px;width:59.3px;top:528.4px;text-align:right;">2</div>
<div class="cell" style="left:243.0px;top:555.9px;">115</div>
<div class="cell" style="left:323.7px;top:555.9px;">41</div>
<div class="cell" style="left:372px;width:79.3px;top:555.9px;text-align:right;">2.740</div>
<div class="cell" style="left:454.5px;width:105.3px;top:555.9px;text-align:right;">17685.349</div>
<div class="cell" style="left:563px;width:124.3px;top:555.9px;text-align:right;">-18398.322</div>
<div class="cell" style="left:690.5px;width:116.59999999999995px;top:555.9px;text-align:right;">-14190.208</div>
<div class="cell" style="left:1012px;width:59.3px;top:555.9px;text-align:right;">2</div>
<div class="cell" style="left:243.0px;top:583.4px;">116</div>
<div class="cell" style="left:323.7px;top:583.4px;">41</div>
<div class="cell" style="left:372px;width:79.3px;top:583.4px;text-align:right;">2.740</div>
<div class="cell" style="left:454.5px;width:105.3px;top:583.4px;text-align:right;">17685.348</div>
<div class="cell" style="left:563px;width:124.3px;top:583.4px;text-align:right;">-18398.327</div>
<div class="cell" style="left:690.5px;width:116.59999999999995px;top:583.4px;text-align:right;">-14190.213</div>
<div class="cell" style="left:1012px;width:59.3px;top:583.4px;text-align:right;">2</div>
<div class="cell" style="left:243.0px;top:610.9px;">117</div>
<div class="cell" style="left:323.7px;top:610.9px;">41</div>
<div class="cell" style="left:372px;width:79.3px;top:610.9px;text-align:right;">2.740</div>
<div class="cell" style="left:454.5px;width:105.3px;top:610.9px;text-align:right;">17686.129</div>
<div class="cell" style="left:563px;width:124.3px;top:610.9px;text-align:right;">-18395.274</div>
<div class="cell" style="left:690.5px;width:116.59999999999995px;top:610.9px;text-align:right;">-14191.186</div>
<div class="cell" style="left:1012px;width:59.3px;top:610.9px;text-align:right;">3</div>
<div class="cell" style="left:243.0px;top:638.4px;">118</div>
<div class="cell" style="left:323.7px;top:638.4px;">41</div>
<div class="cell" style="left:372px;width:79.3px;top:638.4px;text-align:right;">2.740</div>
<div class="cell" style="left:454.5px;width:105.3px;top:638.4px;text-align:right;">17690.236</div>
<div class="cell" style="left:563px;width:124.3px;top:638.4px;text-align:right;">-18395.461</div>
<div class="cell" style="left:690.5px;width:116.59999999999995px;top:638.4px;text-align:right;">-14195.019</div>
<div class="cell" style="left:1012px;width:59.3px;top:638.4px;text-align:right;">3</div>
<div class="cell" style="left:243.0px;top:665.9px;">119</div>
<div class="cell" style="left:323.7px;top:665.9px;">41</div>
<div class="cell" style="left:372px;width:79.3px;top:665.9px;text-align:right;">2.740</div>
<div class="cell" style="left:454.5px;width:105.3px;top:665.9px;text-align:right;">17690.634</div>
<div class="cell" style="left:563px;width:124.3px;top:665.9px;text-align:right;">-18398.497</div>
<div class="cell" style="left:690.5px;width:116.59999999999995px;top:665.9px;text-align:right;">-14194.984</div>
<div class="cell" style="left:1012px;width:59.3px;top:665.9px;text-align:right;">2</div>
<div class="cell" style="left:243.0px;top:693.4px;">120</div>
<div class="cell" style="left:323.7px;top:693.4px;">41</div>
<div class="cell" style="left:372px;width:79.3px;top:693.4px;text-align:right;">3.900</div>
<div class="cell" style="left:454.5px;width:105.3px;top:693.4px;text-align:right;">17686.263</div>
<div class="cell" style="left:563px;width:124.3px;top:693.4px;text-align:right;">-18403.526</div>
<div class="cell" style="left:690.5px;width:116.59999999999995px;top:693.4px;text-align:right;">-14188.861</div>
<div class="cell" style="left:1012px;width:59.3px;top:693.4px;text-align:right;">2</div>

<div class="abs" style="left:1126.1px;top:170.29999999999998px;width:22.100000000000136px;height:548.2px;background:#f9f9f9;"></div>
<div class="abs" style="left:1125.1px;top:170.29999999999998px;width:1px;height:548.2px;background:#8c8c9c;"></div>
<div class="abs" style="left:1147.0px;top:170.29999999999998px;width:1.2px;height:548.2px;background:#9c9c9c;"></div>
<div class="abs sbtn" style="left:1126.1px;top:170.29999999999998px;width:22.100000000000136px;height:19.30000000000001px;"></div>
<div class="abs sbtn" style="left:1126.1px;top:190.6px;width:22.100000000000136px;height:20.599999999999994px;"></div>
<div class="abs sbtn" style="left:1126.1px;top:698.6px;width:22.100000000000136px;height:19.899999999999977px;"></div>
<div class="abs" style="left:1127px;top:723.4px;width:19.6px;height:1.8px;background:#fff;"></div>
<div class="abs" style="left:1146.6px;top:722.6px;width:1.6px;height:2.6px;background:#8a8a8a;"></div>
<svg class="abs" style="left:1126.1px;top:170.29999999999998px;" width="22" height="548.2" viewBox="1126.1 170.29999999999998 22 548.2"><path d="M1131.9,182.4 L1140.9,182.4 L1136.4,177.6 Z" fill="#000"/><path d="M1131.9,706.9 L1140.9,706.9 L1136.4,711.8 Z" fill="#000"/></svg>

<div class="abs" id="tip">Export Google Earth</div>
<svg class="abs" style="left:490px;top:40px;" width="80" height="100" viewBox="490 40 80 100">
<path d="M503.9,125.4 L538.6,72.4" stroke="#ff0000" stroke-width="4.4" stroke-linecap="butt"/>
<path d="M551.9,51.6 L528.6,70.2 L545.4,80.2 Z" fill="#ff0000"/>
</svg>

</div>
</body></html>
